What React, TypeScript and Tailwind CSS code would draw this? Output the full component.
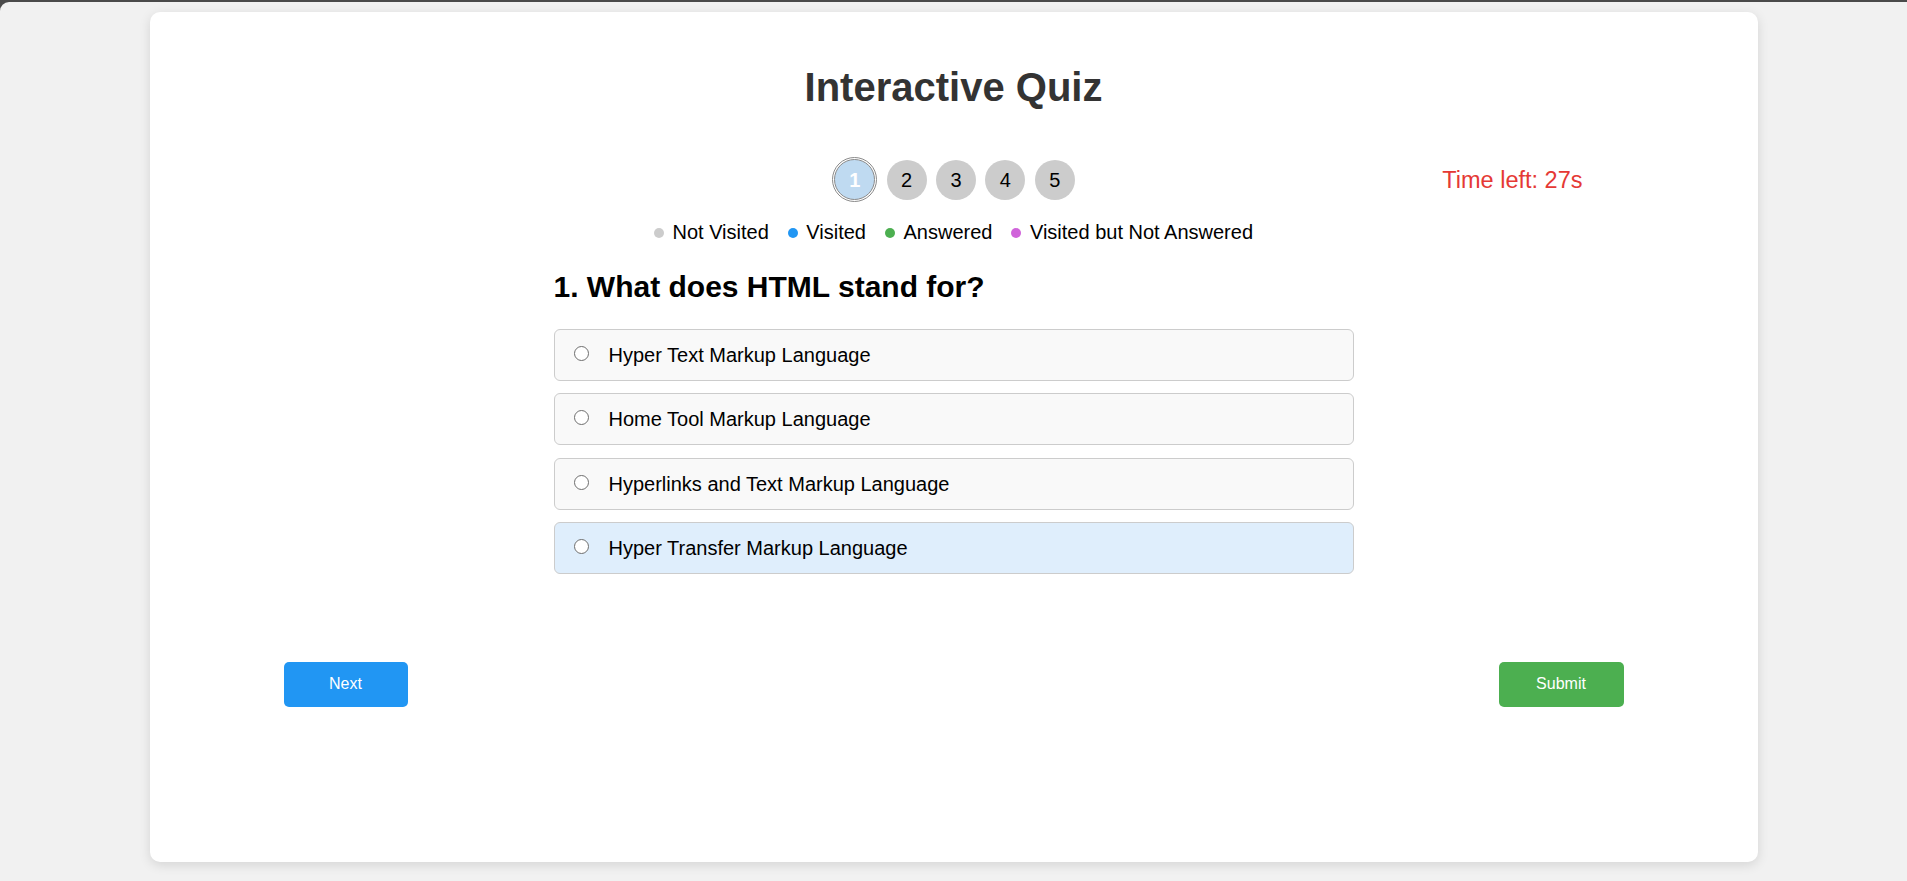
import React from 'react';

const font = { fontFamily: '"Liberation Sans", Arial, sans-serif' };

const legend = [
  { label: 'Not Visited', dot: 'bg-[#cccccc]' },
  { label: 'Visited', dot: 'bg-[#2196f3]' },
  { label: 'Answered', dot: 'bg-[#4caf50]' },
  { label: 'Visited but Not Answered', dot: 'bg-[#d063da]' },
];

const options = [
  'Hyper Text Markup Language',
  'Home Tool Markup Language',
  'Hyperlinks and Text Markup Language',
  'Hyper Transfer Markup Language',
];

export default function App() {
  return (
    <div className="min-h-screen bg-[#4a4a4a] pt-[2px]" style={font}>
      <div className="min-h-[879px] rounded-tl-[9px] bg-[#f1f1f1] pt-[10px]">
        <div className="mx-auto flex h-[850px] w-[1608px] flex-col rounded-[10px] bg-white pt-[25px] shadow-[0_3px_12px_rgba(0,0,0,0.12)]">
          <h1 className="mt-[27px] text-center text-[40px] font-bold leading-[46px] text-[#333333]">
            Interactive Quiz
          </h1>

          <div className="relative mt-[47px] flex h-[45px] items-center justify-center gap-[9.4px]">
            <button className="mx-[2px] flex h-[41px] w-[41px] items-center justify-center rounded-full border border-[#8a8a8a] bg-[#bfdaf1] text-[20px] font-bold text-white outline outline-1 outline-offset-[1px] outline-[#8a8a8a]">
              1
            </button>
            {[2, 3, 4, 5].map((n) => (
              <button
                key={n}
                className="flex h-[40px] w-[40px] items-center justify-center rounded-full bg-[#cccccc] text-[20px] text-black"
              >
                {n}
              </button>
            ))}
            <div className="absolute right-[175px] top-1/2 mt-[1px] -translate-y-1/2 text-[23.5px] text-[#e53935]">
              Time left: 27s
            </div>
          </div>

          <div className="mt-[19px] flex items-center justify-center gap-[19px] text-[20px] leading-[23px] text-black">
            {legend.map((l) => (
              <div key={l.label} className="flex items-center gap-[8.5px]">
                <span className={`h-[10px] w-[10px] rounded-full ${l.dot}`} />
                <span>{l.label}</span>
              </div>
            ))}
          </div>

          <div className="mx-auto mt-[26px] w-[800px]">
            <h2 className="text-[30px] font-bold leading-[34px] text-black">1. What does HTML stand for?</h2>
            <div className="mt-[25px] flex flex-col gap-[12.3px]">
              {options.map((o, i) => (
                <label
                  key={o}
                  className={`flex h-[52px] items-center rounded-[6px] border border-[#cccccc] px-[19px] text-[20px] text-black ${
                    i === 3 ? 'bg-[#dfeefc]' : 'bg-[#f9f9f9]'
                  }`}
                >
                  <span className="mb-[3px] h-[15px] w-[15px] rounded-full border border-[#6e6e6e] bg-white" />
                  <span className="ml-[20px]">{o}</span>
                </label>
              ))}
            </div>
          </div>

          <div className="mt-[88px] flex justify-between px-[134px]">
            <button className="h-[45px] w-[124px] rounded-[5px] bg-[#2196f3] text-[16px] text-white">Next</button>
            <button className="h-[45px] w-[125px] rounded-[5px] bg-[#4caf50] text-[16px] text-white">Submit</button>
          </div>
        </div>
      </div>
    </div>
  );
}
